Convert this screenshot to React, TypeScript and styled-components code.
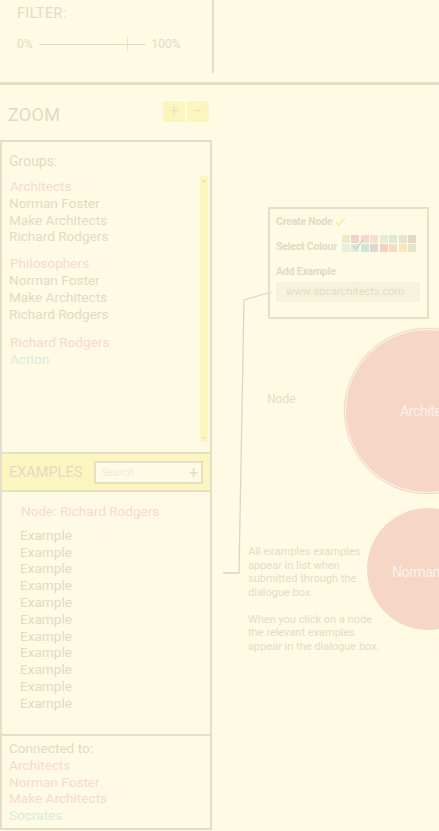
import React from "react";
import styled, { createGlobalStyle } from "styled-components";

const C = {
  bg: "#fefae3",
  line: "#e4e0c7",
  text: "#e0dcc4",
  pink: "#f6dacd",
  teal: "#dbecdf",
  yellow: "#fcf5c0",
  circle: "#f6d6c4",
};

const Global = createGlobalStyle`
  html, body { margin: 0; padding: 0; background: ${C.bg}; }
  body { font-family: Roboto, "Liberation Sans", sans-serif; color: ${C.text}; }
  * { box-sizing: border-box; }
`;

const Page = styled.div`
  width: 439px;
  height: 831px;
  overflow: hidden;
  background: ${C.bg};
  display: flex;
  flex-direction: column;
`;

const Header = styled.header`
  height: 85px;
  flex: none;
  border-bottom: 3px solid ${C.line};
  display: flex;
  align-items: flex-start;
`;

const FilterPanel = styled.div`
  width: 214px;
  height: 73px;
  border-right: 2px solid ${C.line};
  padding: 4px 0 0 17px;
  display: flex;
  flex-direction: column;
  gap: 14px;
`;

const SmallCaps = styled.div`
  font-size: 14px;
  letter-spacing: 0.6px;
  line-height: 18px;
`;

const SliderRow = styled.div`
  display: flex;
  align-items: center;
  font-size: 12px;
  gap: 6px;
  height: 16px;
`;

const Track = styled.div`
  position: relative;
  width: 107px;
  height: 1px;
  background: ${C.text};
`;

const Thumb = styled.div`
  position: absolute;
  left: 88px;
  top: -7px;
  width: 1px;
  height: 14px;
  background: #e3e7c4;
`;

const Main = styled.div`
  flex: 1;
  display: flex;
  min-height: 0;
`;

const Side = styled.aside`
  width: 212px;
  flex: none;
  display: flex;
  flex-direction: column;
`;

const ZoomRow = styled.div`
  height: 55px;
  display: flex;
  align-items: center;
  justify-content: space-between;
  padding: 4px 3px 0 8px;
`;

const ZoomTitle = styled.div`
  font-size: 18px;
  letter-spacing: 0.3px;
`;

const ZoomButtons = styled.div`
  display: flex;
  gap: 2px;
  margin-top: -7px;
`;

const ZoomBtn = styled.div`
  width: 22px;
  height: 21px;
  background: ${C.yellow};
  display: flex;
  align-items: center;
  justify-content: center;
  font-size: 15px;
  color: #e8e2b8;
`;

const Panel = styled.section<{ $h: number; $pt?: number }>`
  height: ${(p) => p.$h}px;
  flex: none;
  border: 2px solid ${C.line};
  border-top-width: 0;
  padding-top: ${(p) => p.$pt ?? 0}px;
  display: flex;
  flex-direction: column;
`;

const GroupsPanel = styled(Panel)`
  border-top-width: 2px;
`;

const PanelLabel = styled.div`
  font-size: 14px;
  line-height: 17px;
  padding-left: 7px;
`;

const GroupsBody = styled.div`
  display: flex;
  flex: 1;
  padding: 6px 0 10px 0;
`;

const List = styled.div<{ $pl?: number; $pt?: number }>`
  flex: 1;
  padding: ${(p) => p.$pt ?? 2}px 0 0 ${(p) => p.$pl ?? 7}px;
  display: flex;
  flex-direction: column;
`;

const Item = styled.div<{ $color?: string; $indent?: number; $gap?: number }>`
  font-size: 13.6px;
  line-height: 16.8px;
  color: ${(p) => p.$color ?? C.text};
  padding-left: ${(p) => p.$indent ?? 0}px;
  margin-top: ${(p) => p.$gap ?? 0}px;
  white-space: nowrap;
`;

const Scroll = styled.div`
  width: 8px;
  margin-right: 2px;
  background: ${C.yellow};
  display: flex;
  flex-direction: column;
  justify-content: space-between;
  align-items: center;
  font-size: 5px;
  line-height: 6px;
  color: #e6dfb5;
  padding: 1px 0;
`;

const ExamplesBar = styled.div`
  height: 38px;
  flex: none;
  background: ${C.yellow};
  border: 2px solid ${C.line};
  border-top-width: 0;
  display: flex;
  align-items: center;
  padding: 0 7px 0 7px;
  gap: 12px;
`;

const BarTitle = styled.div`
  font-size: 14.5px;
  letter-spacing: 0;
`;

const Search = styled.div`
  width: 110px;
  height: 23px;
  border: 2px solid ${C.line};
  background: ${C.bg};
  display: flex;
  align-items: center;
  justify-content: space-between;
  padding: 0 3px 0 5px;
  font-size: 11px;
  font-style: italic;
  color: #f0ecd6;
`;

const Plus = styled.span`
  font-style: normal;
  font-size: 16px;
  color: ${C.text};
`;

const Canvas = styled.div`
  position: relative;
  flex: 1;
`;

const Lines = styled.svg`
  position: absolute;
  left: 0;
  top: 0;
`;

const Dialog = styled.div`
  position: absolute;
  left: 56px;
  top: 122px;
  width: 161px;
  height: 112px;
  border: 2px solid ${C.line};
  padding: 6px 0 0 6px;
  display: flex;
  flex-direction: column;
`;

const DLabel = styled.div`
  font-family: "Liberation Sans Narrow", Roboto, sans-serif;
  font-weight: bold;
  font-size: 10.5px;
  letter-spacing: -0.2px;
  line-height: 13px;
  color: ${C.text};
  display: flex;
  align-items: center;
  gap: 3px;
  height: 13px;
  white-space: nowrap;
`;

const DRow = styled.div<{ $mt: number }>`
  display: flex;
  align-items: center;
  gap: 5px;
  margin-top: ${(p) => p.$mt}px;
`;

const Swatches = styled.div`
  position: relative;
  display: grid;
  grid-template-columns: repeat(8, 8px);
  grid-auto-rows: 8px;
  gap: 1px 1.5px;
  margin-top: -6px;
`;

const Swatch = styled.div<{ $c: string }>`
  background: ${(p) => p.$c};
`;

const SwatchCheck = styled.svg`
  position: absolute;
  left: 10px;
  top: 4px;
`;

const UrlBox = styled.div`
  margin-top: 4px;
  width: 144px;
  height: 20px;
  background: #f6f2db;
  font-size: 11px;
  line-height: 20px;
  padding-left: 10px;
  color: #e2dec6;
  white-space: nowrap;
`;

const Bubble = styled.div<{ $x: number; $y: number; $r: number; $ring?: boolean }>`
  position: absolute;
  left: ${(p) => p.$x - p.$r}px;
  top: ${(p) => p.$y - p.$r}px;
  width: ${(p) => p.$r * 2}px;
  height: ${(p) => p.$r * 2}px;
  border-radius: 50%;
  background: ${C.circle};
  box-shadow: ${(p) => (p.$ring ? `inset 0 0 0 1px ${C.circle}, inset 0 0 0 2px #fdf3ea` : "none")};
`;

const BubbleLabel = styled.div<{ $x: number; $y: number }>`
  position: absolute;
  left: ${(p) => p.$x}px;
  top: ${(p) => p.$y}px;
  font-family: "Liberation Sans Narrow", Roboto, sans-serif;
  font-size: 14px;
  letter-spacing: -0.4px;
  line-height: 16px;
  color: #fdf2ea;
  white-space: nowrap;
`;

const Note = styled.div<{ $x: number; $y: number }>`
  position: absolute;
  left: ${(p) => p.$x}px;
  top: ${(p) => p.$y}px;
  font-size: 11px;
  line-height: 13.5px;
  color: #e2dec6;
  white-space: nowrap;
`;

const NodeLabel = styled(Note)`
  font-size: 12px;
`;

const Para = styled.p`
  margin: 0 0 13.5px 0;
`;

const swatchRows = [
  ["#efeac6", "#f4d0cb", "#efdad6", "#f6e0cf", "#e8edcf", "#e0e9d7", "#eddfcf", "#dedac9"],
  ["#e5efdc", "#dcece3", "#cfe3dc", "#d9dbd3", "#f5d1c5", "#f6dcc7", "#f7e8be", "#e2e6cb"],
];

const Check = ({ c, w = 11 }: { c: string; w?: number }) => (
  <svg width={w} height={w} viewBox="0 0 12 12">
    <path d="M1 7 L4 10 L11 2" fill="none" stroke={c} strokeWidth="1.4" />
  </svg>
);

export default function App() {
  const examples = Array.from({ length: 11 }, () => "Example");
  return (
    <Page>
      <Global />
      <Header>
        <FilterPanel>
          <SmallCaps>FILTER:</SmallCaps>
          <SliderRow>
            <span>0%</span>
            <Track>
              <Thumb />
            </Track>
            <span>100%</span>
          </SliderRow>
        </FilterPanel>
      </Header>
      <Main>
        <Side>
          <ZoomRow>
            <ZoomTitle>ZOOM</ZoomTitle>
            <ZoomButtons>
              <ZoomBtn>+</ZoomBtn>
              <ZoomBtn>−</ZoomBtn>
            </ZoomButtons>
          </ZoomRow>
          <GroupsPanel $h={314} $pt={11}>
            <PanelLabel>Groups:</PanelLabel>
            <GroupsBody>
              <List $pt={2}>
                <Item $color={C.pink} $indent={1}>Architects</Item>
                <Item>Norman Foster</Item>
                <Item>Make Architects</Item>
                <Item>Richard Rodgers</Item>
                <Item $color={C.pink} $indent={1} $gap={10}>Philosophers</Item>
                <Item>Norman Foster</Item>
                <Item>Make Architects</Item>
                <Item>Richard Rodgers</Item>
                <Item $color={C.pink} $indent={1} $gap={12}>Richard Rodgers</Item>
                <Item $color={C.teal} $indent={1}>Acrion</Item>
              </List>
              <Scroll>
                <span>▲</span>
                <span>▼</span>
              </Scroll>
            </GroupsBody>
          </GroupsPanel>
          <ExamplesBar>
            <BarTitle>EXAMPLES</BarTitle>
            <Search>
              <span>Search</span>
              <Plus>+</Plus>
            </Search>
          </ExamplesBar>
          <Panel $h={244} $pt={11}>
            <Item $color={C.pink} $indent={19}>Node: Richard Rodgers</Item>
            <List $pl={18} $pt={7}>
              {examples.map((e, i) => (
                <Item key={i}>{e}</Item>
              ))}
            </List>
          </Panel>
          <Panel $h={94} $pt={4}>
            <List $pl={7} $pt={0}>
              <Item>Connected to:</Item>
              <Item $color={C.pink}>Architects</Item>
              <Item $color={C.pink}>Norman Foster</Item>
              <Item $color={C.pink}>Make Architects</Item>
              <Item $color={C.teal}>Socrates</Item>
            </List>
          </Panel>
        </Side>
        <Canvas>
          <Bubble $x={215} $y={326} $r={83} $ring />
          <BubbleLabel $x={188} $y={318}>Architects</BubbleLabel>
          <Bubble $x={216} $y={484} $r={61} />
          <BubbleLabel $x={180} $y={479}>Norman Foster</BubbleLabel>
          <Lines width="227" height="747">
            <polyline
              points="60,207 32,215 27,488 11,488"
              fill="none"
              stroke="#dcd8c0"
              strokeWidth="1.3"
            />
          </Lines>
          <Dialog>
            <DLabel>
              Create Node <Check c="#eef08f" />
            </DLabel>
            <DRow $mt={12}>
              <DLabel>Select Colour</DLabel>
              <Swatches>
                {swatchRows.flat().map((c, i) => (
                  <Swatch key={i} $c={c} />
                ))}
                <SwatchCheck width="12" height="12" viewBox="0 0 12 12">
                  <path d="M1 7 L4 10 L11 1" fill="none" stroke="#c9cbb8" strokeWidth="1.2" />
                </SwatchCheck>
              </Swatches>
            </DRow>
            <DRow $mt={12}>
              <DLabel>Add Example</DLabel>
            </DRow>
            <UrlBox>www.abcarchitects.com</UrlBox>
          </Dialog>
          <NodeLabel $x={55} $y={308}>Node</NodeLabel>
          <Note $x={36} $y={460}>
            <Para>
              All examples examples
              <br />
              appear in list when
              <br />
              submitted through the
              <br />
              dialogue box.
            </Para>
            <Para>
              When you click on a node
              <br />
              the relevant examples
              <br />
              appear in the dialogue box.
            </Para>
          </Note>
        </Canvas>
      </Main>
    </Page>
  );
}
